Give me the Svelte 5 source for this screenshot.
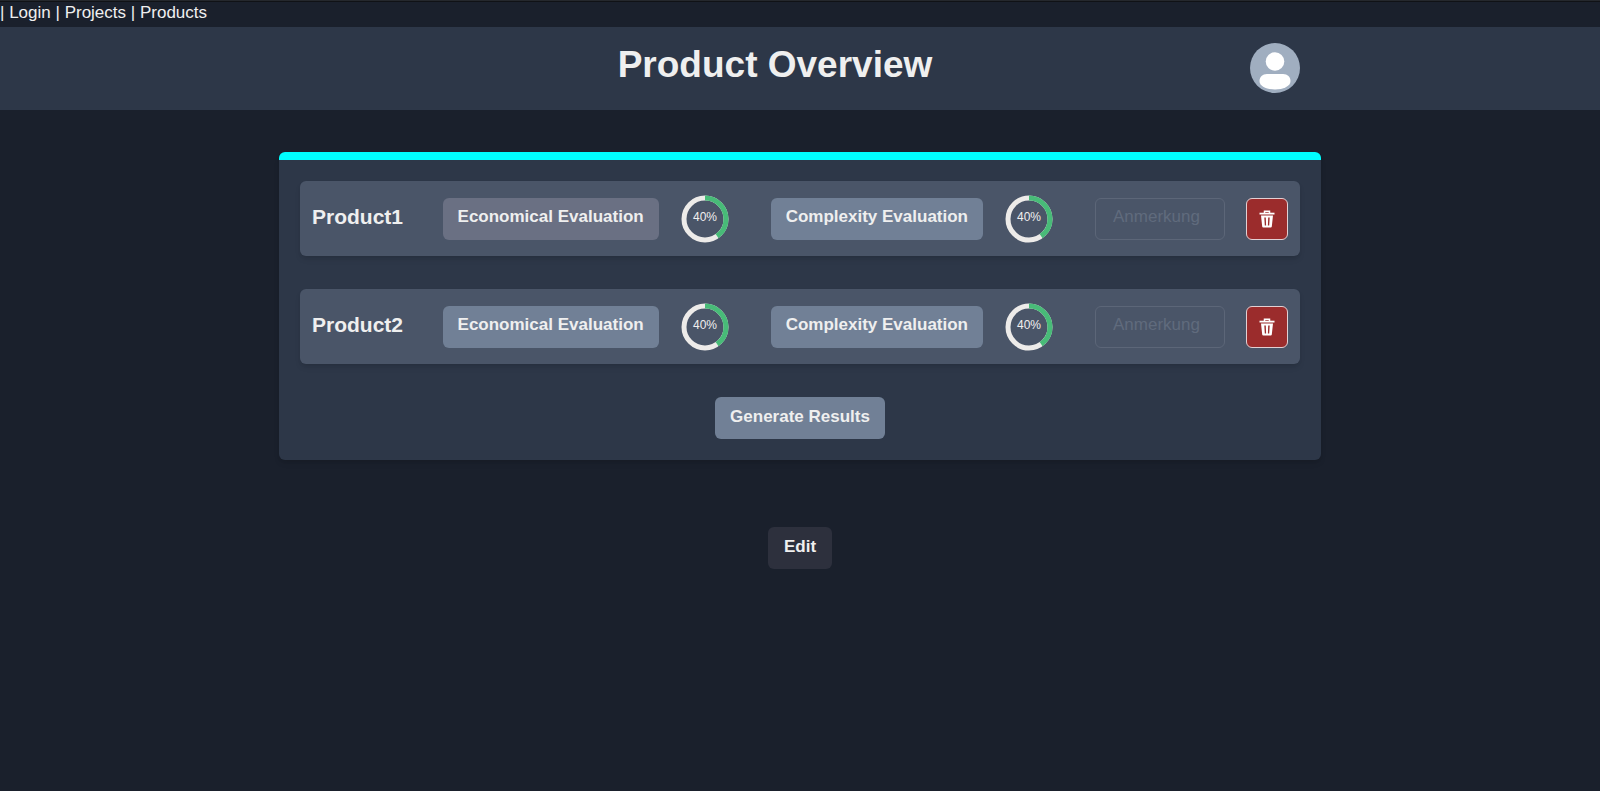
<script>
  const products = [
    { name: 'Product1', economical: 40, complexity: 40, hovered: true },
    { name: 'Product2', economical: 40, complexity: 40, hovered: false }
  ];
</script>

{#snippet progress(value, label)}
  <svg class="ring" viewBox="0 0 100 100" role="img" aria-label={label}>
    <circle cx="50" cy="50" r="42" fill="none" stroke="#edebe9" stroke-width="10" />
    <circle
      cx="50" cy="50" r="42" fill="none" stroke="#48bb78" stroke-width="10"
      pathLength="100" stroke-dasharray="{value} {100 - value}" transform="rotate(-90 50 50)"
    />
    <text x="50" y="54" text-anchor="middle">{value}%</text>
  </svg>
{/snippet}

<div class="page">
  <nav>| <a href="#login">Login</a> | <a href="#projects">Projects</a> | <a href="#products">Products</a></nav>

  <header>
    <div class="bar">
      <h1>Product Overview</h1>
      <button class="avatar" aria-label="Account">
        <svg viewBox="0 0 50 50" aria-hidden="true">
          <circle cx="25" cy="25" r="25" fill="#a0aec0" />
          <circle cx="25" cy="18.5" r="9.3" fill="#fff" />
          <path fill="#fff" d="M17 31H33C37.5 31 40.5 34 40.5 38C40.5 43.5 33 46.5 25 46.5S9.500 43.500 9.500 38C9.500 34 12.500 31 17 31Z" />
        </svg>
      </button>
    </div>
  </header>

  <main>
    <section class="card">
      {#each products as product}
        <article class="row">
          <h2>{product.name}</h2>
          <div class="evaluation">
            <button class="btn" class:hovered={product.hovered}>Economical Evaluation</button>
            {@render progress(product.economical, 'Economical progress')}
          </div>
          <div class="evaluation">
            <button class="btn">Complexity Evaluation</button>
            {@render progress(product.complexity, 'Complexity progress')}
          </div>
          <input class="note" type="text" placeholder="Anmerkung" aria-label="Anmerkung" disabled />
          <button class="delete" aria-label="Delete {product.name}">
            <svg viewBox="0 0 16 18" aria-hidden="true">
              <path fill="none" stroke="#fff" stroke-width="1.500" d="M5.500 3V1.200H10.500V3" />
              <path fill="#fff" d="M.5 2.700H15.500V4.500H.5Z" />
              <path fill="#fff" fill-rule="evenodd" d="M2 5.500H14L12.800 16.500Q12.700 17.500 11.700 17.500H4.300Q3.300 17.500 3.200 16.500ZM5.300 7.500L5.800 15.500H7.100L6.800 7.500ZM9.200 7.500L8.900 15.500H10.200L10.700 7.500Z" />
            </svg>
          </button>
        </article>
      {/each}
      <button class="btn">Generate Results</button>
    </section>
    <button class="btn edit">Edit</button>
  </main>
</div>

<style>
  :global(body) {
    margin: 0;
    background: #1a202c;
  }

  .page {
    border-top: 1px solid #25282d;
    box-sizing: border-box;
    color: #efefef;
    font: 17px/25px "Liberation Sans", Arial, sans-serif;
  }

  nav {
    border-top: 1px solid #101216;
    height: 25px;
    line-height: 22px;
  }

  a {
    color: inherit;
    text-decoration: none;
  }

  header {
    background: #2d3748;
  }

  .bar,
  main {
    max-width: 1042px;
    margin: 0 auto;
  }

  .bar {
    display: grid;
    grid-template-columns: 1fr 50px;
    align-items: center;
    box-sizing: border-box;
    padding: 16px 21px 17px;
  }

  h1 {
    margin: 0;
    padding-bottom: 6px;
    font-size: 37px;
    line-height: 40px;
    text-align: center;
  }

  button {
    padding: 0;
    border: 0;
    color: inherit;
    font: inherit;
  }

  .avatar {
    display: flex;
    width: 50px;
    height: 50px;
    border-radius: 50%;
    background: none;
  }

  .avatar svg {
    width: 100%;
  }

  main {
    display: flex;
    flex-direction: column;
    align-items: center;
    gap: 67px;
    margin-top: 42px;
  }

  .card {
    display: flex;
    flex-direction: column;
    align-items: center;
    gap: 33px;
    width: 100%;
    box-sizing: border-box;
    padding: 21px;
    border-top: 8px solid #00ffff;
    border-radius: 6px;
    background: #2d3748;
    box-shadow: 0 4px 6px -1px #0000001a, 0 2px 4px -1px #0000000f;
  }

  .row {
    display: flex;
    align-items: center;
    gap: 21px;
    width: 100%;
    height: 75px;
    box-sizing: border-box;
    padding: 0 12px;
    border-radius: 6px;
    background: #4a5568;
    box-shadow: 0 4px 6px -1px #0000001a, 0 2px 4px -1px #0000000f;
  }

  h2 {
    flex: 1;
    margin: 0;
    padding-bottom: 4px;
    font-size: 21px;
    line-height: 25px;
  }

  .evaluation {
    display: flex;
    align-items: center;
    gap: 21px;
    margin-right: 20px;
  }

  .btn {
    height: 42px;
    padding: 0 15px 4px;
    border-radius: 6px;
    background: #718096;
    font-weight: bold;
    white-space: nowrap;
  }

  .hovered {
    background: #6a7083;
  }

  .edit {
    padding: 0 16px 4px;
    background: #2d303d;
  }

  .ring {
    width: 50px;
    height: 50px;
  }

  .ring text {
    fill: #efefef;
    font-size: 24px;
  }

  .note {
    width: 130px;
    height: 42px;
    box-sizing: border-box;
    padding: 0 17px 4px;
    border: 1px solid #5c6678;
    border-radius: 6px;
    background: none;
    font: inherit;
  }

  .note::placeholder {
    color: #606b7d;
    opacity: 1;
  }

  .delete {
    display: grid;
    place-items: center;
    width: 42px;
    height: 42px;
    border: 1px solid #e2d0d3;
    border-radius: 6px;
    background: #9b2c2c;
  }

  .delete svg {
    width: 16px;
    height: 18px;
  }
</style>
